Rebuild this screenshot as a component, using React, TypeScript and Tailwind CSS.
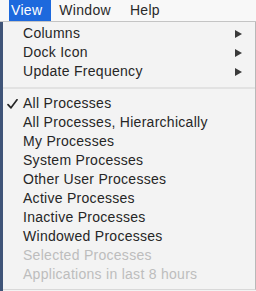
import React from "react";

const font = { fontFamily: '"Liberation Sans", Arial, sans-serif' };

function Arrow() {
  return (
    <svg width="7" height="8" viewBox="0 0 7 8" className="absolute left-[232px] top-[6px]">
      <path d="M0 0 L7 4 L0 8 Z" fill="#3a3a3a" />
    </svg>
  );
}

function Check() {
  return (
    <svg width="11" height="10" viewBox="0 0 11 10" className="absolute left-[4px] top-[5px]">
      <path d="M1 5.6 L4 8.8 L10 0.8" fill="none" stroke="#262626" strokeWidth="1.7" strokeLinecap="round" strokeLinejoin="round" />
    </svg>
  );
}

function Row({ label, sub, checked, disabled }: { label: string; sub?: boolean; checked?: boolean; disabled?: boolean }) {
  return (
    <div className={`relative h-[19px] leading-[19px] pl-[20px] text-[14px] tracking-[0.28px] whitespace-nowrap ${disabled ? "text-[#bdbdbd]" : "text-[#262626]"}`}>
      {checked && <Check />}
      {label}
      {sub && <Arrow />}
    </div>
  );
}

export default function App() {
  return (
    <div className="w-[256px] h-[291px] overflow-hidden bg-[#f3f3f3] flex flex-col" style={font}>
      <div className="h-[22px] bg-[#f8f8f8] border-b border-[#c4c4c4] flex items-start text-[14px] leading-[21px] tracking-[0.3px] text-[#2a2a2a]">
        <div className="ml-[9px] h-[21px] pl-[2px] pr-[9px] bg-[#1d69dd] text-white">View</div>
        <div className="ml-[8px]">Window</div>
        <div className="ml-[19px]">Help</div>
      </div>
      <div className="flex flex-1">
        <div className="w-[3px] bg-[#3f5478]" />
        <div className="flex-1 flex flex-col">
          <div className="bg-[#f3f3f3] border-r border-[#b8b8b8] border-b border-b-[#d8d8d8] pt-[2px] pb-[5px]">
            <Row label="Columns" sub />
            <Row label="Dock Icon" sub />
            <Row label="Update Frequency" sub />
            <div className="pt-[6px] pb-[5px]">
              <div className="h-[2px] bg-[#e2e2e2]" />
            </div>
            <Row label="All Processes" checked />
            <Row label="All Processes, Hierarchically" />
            <Row label="My Processes" />
            <Row label="System Processes" />
            <Row label="Other User Processes" />
            <Row label="Active Processes" />
            <Row label="Inactive Processes" />
            <Row label="Windowed Processes" />
            <Row label="Selected Processes" disabled />
            <Row label="Applications in last 8 hours" disabled />
          </div>
        </div>
      </div>
    </div>
  );
}
